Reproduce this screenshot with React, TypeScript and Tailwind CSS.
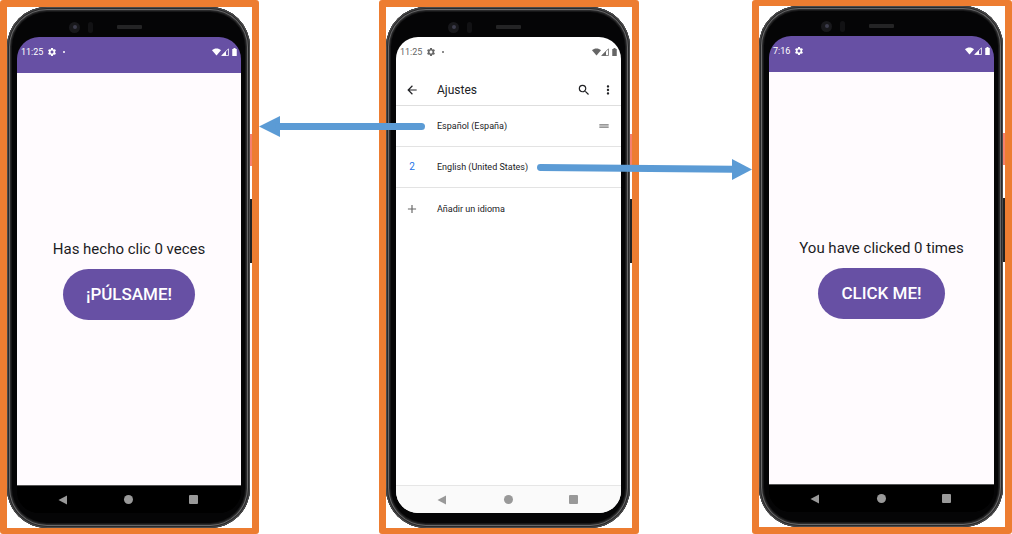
import { useState, type ReactNode } from "react";
import { MdAdd, MdArrowBack, MdDragHandle, MdMoreVert, MdSearch, MdSettings } from "react-icons/md";

function StatusBar({ time, dot, className }: { time: string; dot?: boolean; className: string }) {
  return (
    <div className={`flex h-9 items-start pt-[9px] pr-1 pl-1 ${className}`}>
      <div className="flex h-3 w-full items-center">
        <span className="text-[9px] leading-3">{time}</span>
        <MdSettings className="ml-1 size-[10px]" />
        {dot && <span className="ml-1.5 size-0.5 rounded-full bg-current" />}
        <svg className="ml-auto h-2 w-[9px]" viewBox="0 0 18 16" fill="currentColor">
          <path d="M9 15 0 4.500C2.500 2.200 5.600 1 9 1s6.500 1.200 9 3.500Z" />
        </svg>
        <svg className="h-2 w-2" viewBox="0 0 16 16" fill="currentColor">
          <path d="M1.500 15 15 1.500V15Z" fill="none" stroke="currentColor" strokeWidth="1.500" />
          <path d="M1 15.500 10 6.500v9Z" />
        </svg>
        <svg className="ml-[3px] h-2 w-[5px]" viewBox="0 0 10 16" fill="currentColor">
          <path d="M3 0h4v2h2.500v14H.5V2H3Z" />
        </svg>
      </div>
    </div>
  );
}

function NavBar({ className }: { className: string }) {
  return (
    <nav aria-label="System" className={`flex h-7 items-center justify-between border-t pr-[43px] pl-[41px] text-[#999] ${className}`}>
      <button type="button" aria-label="Back">
        <svg className="size-[10px]" viewBox="0 0 20 20" fill="currentColor">
          <path d="M1 10 18 1v18Z" />
        </svg>
      </button>
      <button type="button" aria-label="Home" className="size-[9px] rounded-full bg-current" />
      <button type="button" aria-label="Recents" className="size-[9px] rounded-[1px] bg-current" />
    </nav>
  );
}

function Phone({ children, frame }: { children: ReactNode; frame: string }) {
  return (
    <section className={`rounded-[3px] border-x-[7px] border-[#ed7d31] ${frame}`}>
      <div className="relative pr-0.5">
        <span className="absolute top-[127px] right-0 h-8 w-0.5 bg-[#f5806c]" />
        <span className="absolute top-[192px] right-0 h-16 w-0.5 bg-[#222]" />
        <div className="rounded-[40px] bg-[#050506] pr-[9px] pb-[15px] pl-2.5 shadow-[inset_0_0_0_1px_#4b4b4c,inset_0_0_0_2px_#29292a,inset_0_0_0_3px_#69696a,inset_0_0_0_4px_#2a2a2b,inset_0_0_0_5px_#171718]">
          <div className="flex h-[30px] items-center pt-2.5 pl-[52px]">
            <span className="flex size-[11px] items-center justify-center rounded-full bg-[#18181b]">
              <span className="size-1 rounded-full bg-[#3d3d4c]" />
            </span>
            <span className="ml-2 h-[11px] w-[5px] rounded-full bg-[#121214]" />
            <span className="ml-6 h-1 w-[25px] rounded-[1px] bg-[#242425]" />
          </div>
          {children}
        </div>
      </div>
    </section>
  );
}

function ClickScreen({ time, dot, message, action }: { time: string; dot?: boolean; message: (n: number) => string; action: string }) {
  const [count, setCount] = useState(0);
  return (
    <div className="overflow-hidden rounded-[22px] bg-black">
      <StatusBar time={time} dot={dot} className="bg-[#6750a4] text-white" />
      <div className="flex min-h-[412px] flex-col items-center justify-center gap-2.5 bg-[#fffbfe]">
        <p className="text-[15px] leading-5 text-[#1c1b1f]">{message(count)}</p>
        <button
          type="button"
          onClick={() => setCount(count + 1)}
          className="h-[51px] rounded-full bg-[#6750a4] px-[23px] pt-0.5 text-[17px] font-medium text-white"
        >
          {action}
        </button>
      </div>
      <NavBar className="border-[#555] bg-black" />
    </div>
  );
}

function LanguageRow({ label, lead, trail, last }: { label: string; lead?: ReactNode; trail?: ReactNode; last?: boolean }) {
  return (
    <li className={`flex h-[41px] items-center pr-2.5 ${last ? "" : "border-b border-[#e3e3e3]"}`}>
      <span className="flex w-[41px] items-center pl-2.5">
        <span className="flex w-3 justify-center">{lead}</span>
      </span>
      <span className="flex-1">{label}</span>
      {trail}
    </li>
  );
}

function SettingsScreen() {
  return (
    <div className="overflow-hidden rounded-[22px] bg-white text-[#202124]">
      <StatusBar time="11:25" dot className="text-[#666]" />
      <div className="min-h-[412px]">
        <header className="flex h-[33px] items-center border-b border-[#dedede] pt-px pr-1.5 pl-[9px]">
          <button type="button" aria-label="Atrás">
            <MdArrowBack className="size-3.5" />
          </button>
          <h1 className="ml-[18px] flex-1 text-xs">Ajustes</h1>
          <button type="button" aria-label="Buscar">
            <MdSearch className="size-3.5" />
          </button>
          <button type="button" aria-label="Más opciones" className="ml-2.5">
            <MdMoreVert className="size-3.5" />
          </button>
        </header>
        <ul className="text-[9px] leading-3">
          <LanguageRow label="Español (España)" trail={<MdDragHandle className="size-3.5 text-[#777]" />} />
          <LanguageRow label="English (United States)" lead={<span className="text-[10px] text-[#1a73e8]">2</span>} />
          <LanguageRow label="Añadir un idioma" lead={<MdAdd className="size-3.5 shrink-0 text-[#666]" />} last />
        </ul>
      </div>
      <NavBar className="border-[#e6e6e6] bg-[#fafafa]" />
    </div>
  );
}

export default function App() {
  return (
    <main className="grid min-w-[900px] grid-cols-[259px_120fr_260px_113fr_260px] items-start bg-white font-[Roboto,sans-serif]">
      <Phone frame="border-t-[7px] border-b-[6px]">
        <ClickScreen time="11:25" dot message={(n) => `Has hecho clic ${n} veces`} action="¡PÚLSAME!" />
      </Phone>
      <div className="relative">
        <svg className="absolute top-[116px] left-0 z-10 h-[21px] w-[calc(100%+46px)]" viewBox="0 0 166 21" fill="#5b9bd5">
          <path d="M0 10.500 21 0v21Z" />
          <path d="M20 10.500H162.500" stroke="#5b9bd5" strokeWidth="7" strokeLinecap="round" />
        </svg>
      </div>
      <Phone frame="border-t-[7px] border-b-[6px]">
        <SettingsScreen />
      </Phone>
      <div className="relative">
        <svg className="absolute top-[158px] right-0 z-10 h-[22px] w-[calc(100%+102px)]" viewBox="0 0 215 22" fill="#5b9bd5">
          <path d="M215 11.500 195 22V1Z" />
          <path d="M3.500 9.500 196 11.300" stroke="#5b9bd5" strokeWidth="7" strokeLinecap="round" />
        </svg>
      </div>
      <Phone frame="border-t-[6px] border-b-[7px]">
        <ClickScreen time="7:16" message={(n) => `You have clicked ${n} times`} action="CLICK ME!" />
      </Phone>
    </main>
  );
}
